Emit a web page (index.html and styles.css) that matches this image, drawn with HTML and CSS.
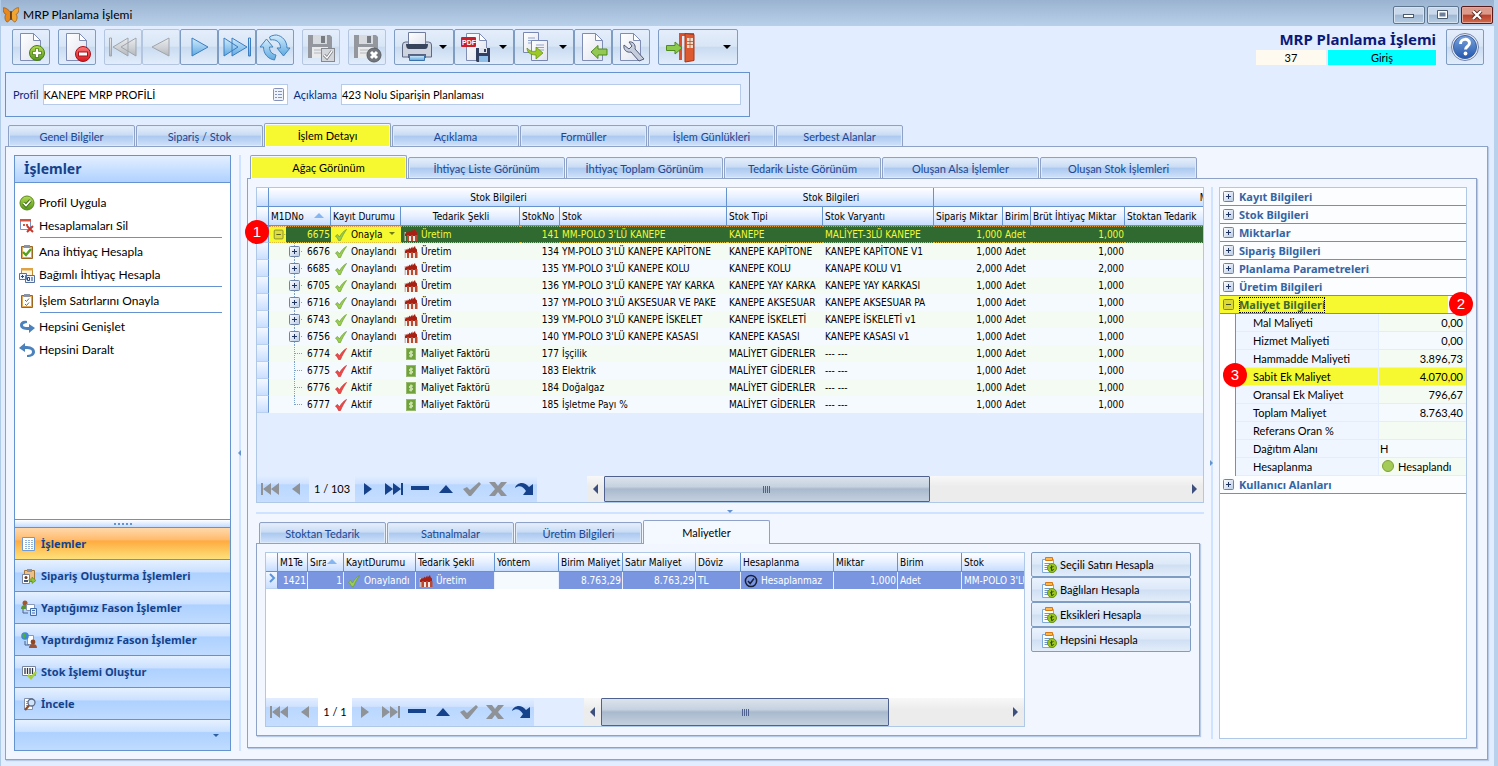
FILE: index.html
```html
<!DOCTYPE html>
<html lang="tr">
<head>
    <meta charset="UTF-8">
    <meta name="viewport" content="width=device-width, initial-scale=1.0">
    <title>MRP Planlama İşlemi</title>
    <link rel="stylesheet" href="styles.css">
</head>
<body>
    <!-- shared icons -->
    <svg class="sprite" width="0" height="0" aria-hidden="true">
        <defs>
            <linearGradient id="g-page" x1="0" y1="0" x2="1" y2="1"><stop offset="0" stop-color="#ffffff"/><stop offset="1" stop-color="#dfe3ee"/></linearGradient>
            <linearGradient id="g-green" x1="0" y1="0" x2="0" y2="1"><stop offset="0" stop-color="#b4dc52"/><stop offset="1" stop-color="#55961a"/></linearGradient>
            <linearGradient id="g-red" x1="0" y1="0" x2="0" y2="1"><stop offset="0" stop-color="#ff7a7a"/><stop offset="1" stop-color="#d8141c"/></linearGradient>
            <linearGradient id="g-blue" x1="0" y1="0" x2="0" y2="1"><stop offset="0" stop-color="#d3ecfb"/><stop offset="1" stop-color="#5ea9e2"/></linearGradient>
            <linearGradient id="g-gray" x1="0" y1="0" x2="0" y2="1"><stop offset="0" stop-color="#eceef0"/><stop offset="1" stop-color="#b4b8be"/></linearGradient>
            <linearGradient id="g-help" x1="0" y1="0" x2="0" y2="1"><stop offset="0" stop-color="#7ba4dc"/><stop offset="1" stop-color="#2458ae"/></linearGradient>
            <linearGradient id="g-box" x1="0" y1="0" x2="1" y2="1"><stop offset="0" stop-color="#ffffff"/><stop offset="1" stop-color="#b9cbe4"/></linearGradient>

            <symbol id="page" viewBox="0 0 32 32"><path d="M5.500 2.500h13l7 7v20h-20z" fill="url(#g-page)" stroke="#7f8db4"/><path d="M18.500 2.500v7h7z" fill="#fff" stroke="#7f8db4"/></symbol>
            <symbol id="floppy" viewBox="0 0 32 32"><path d="M3 4h22l2 2v21H3z" fill="#94989e"/><path d="M8 4h14v9H8z" fill="#d7dade"/><path d="M16 5h4v7h-4z" fill="#777b82"/><path d="M7 16h16v11H7z" fill="#e8eaec"/><path d="M9 19h12M9 22h12" stroke="#b6b9bd"/></symbol>
            <symbol id="t-open" viewBox="0 0 36 17"><rect x="3.500" y="3.500" width="10" height="10" rx="1" fill="#e0dc3a" stroke="#7f8b2c"/><path d="M6 8.500h5" stroke="#44501f"/><path d="M15 8.500h2" stroke="#8b8b2c" stroke-dasharray="1 1"/></symbol>
            <symbol id="t-plus" viewBox="0 0 36 17"><path d="M25.500 0v17M32 8.500h2" stroke="#7d9fc9" stroke-dasharray="1 1"/><rect x="20.500" y="3.500" width="10" height="10" rx="1" fill="url(#g-box)" stroke="#6d83a8"/><path d="M23 8.500h5M25.500 6v5" stroke="#1f3560"/></symbol>
            <symbol id="t-tee" viewBox="0 0 36 17"><path d="M25.500 0v17M26 8.500h8" stroke="#7d9fc9" stroke-dasharray="1 1"/></symbol>
            <symbol id="t-end" viewBox="0 0 36 17"><path d="M25.500 0v9M26 8.500h8" stroke="#7d9fc9" stroke-dasharray="1 1"/></symbol>
            <symbol id="box-plus" viewBox="0 0 11 11"><rect x=".5" y=".5" width="10" height="10" rx="1" fill="url(#g-box)" stroke="#6d83a8"/><path d="M3 5.500h5M5.500 3v5" stroke="#1f3560"/></symbol>
            <symbol id="box-minus" viewBox="0 0 11 11"><rect x=".5" y=".5" width="10" height="10" rx="1" fill="#dcd836" stroke="#7f8b2c"/><path d="M3 5.500h5" stroke="#44501f"/></symbol>
            <symbol id="tick-green" viewBox="0 0 14 14"><path d="M1.500 8l2-1.500 2 2.500C7 6 9.500 3 12.500 1.500 10.500 4.500 8 8.500 6.500 12.500h-2C4 11 3 9.500 1.500 8z" fill="#9bcf4e" stroke="#6c9c35" stroke-width=".7"/></symbol>
            <symbol id="tick-red" viewBox="0 0 14 14"><path d="M1.500 8l2-1.500 2 2.500C7 6 9.500 3 12.500 1.500 10.500 4.500 8 8.500 6.500 12.500h-2C4 11 3 9.500 1.500 8z" fill="#f04a4a" stroke="#c93030" stroke-width=".7"/></symbol>
            <symbol id="factory" viewBox="0 0 14 14"><path d="M.5 4H2v9H.5z" fill="#cdbcb8"/><path d="M1 6l2.500-2.500V5L6 2.500V4l2.500-2.500v2L11 1l.5 2L13 4.500V8H1z" fill="#a81f14"/><path d="M3 7h2v6H3zM7 7h2v6H7zM11 7h2.500v6H11z" fill="#b9492f"/><path d="M5 8h2v5H5zM9 8h2v5H9z" fill="#f2e9e6"/></symbol>
            <symbol id="money" viewBox="0 0 14 14"><rect x="2.500" y="1.500" width="9" height="11" fill="#6fa23a" stroke="#96b96d"/><path d="M9 5H6.500C5 5 5 7 6.500 7h1C9 7 9 9 7.500 9H5M7 3.500v7" fill="none" stroke="#e6f5cf"/></symbol>
            <symbol id="calc" viewBox="0 0 18 18"><path d="M2.500 3.500h11v13h-11z" fill="#fff" stroke="#7fa9d6"/><path d="M4.500 7.500h6M4.500 9.500h5M4.500 11.500h4M4.500 13.500h4" stroke="#6d97c8"/><path d="M5.500 1.500h7v3h-7z" fill="#ffb84d" stroke="#d9780f"/><circle cx="12" cy="12" r="4.500" fill="#9ac51e" stroke="#6b9410"/><path d="M11.500 9.500v5M10 12l3.500-1.500M11.500 14.500q2 0 2-1.500" fill="none" stroke="#2f4a05"/></symbol>

            <symbol id="n-first" viewBox="0 0 20 16"><path d="M1 2h2v12H1zM11 2v12L3 8zM19 2v12l-8-6z"/></symbol>
            <symbol id="n-prev" viewBox="0 0 20 16"><path d="M14 2v12L6 8z"/></symbol>
            <symbol id="n-next" viewBox="0 0 20 16"><path d="M6 2v12l8-6z"/></symbol>
            <symbol id="n-last" viewBox="0 0 20 16"><path d="M1 2v12l8-6zM9 2v12l8-6zM17 2h2v12h-2z"/></symbol>
            <symbol id="n-minus" viewBox="0 0 20 16"><path d="M1 5h18v4H1z"/></symbol>
            <symbol id="n-up" viewBox="0 0 20 16"><path d="M3 12h14l-7-8z"/></symbol>
            <symbol id="n-ok" viewBox="0 0 20 16"><path d="M1 8l4-2 3 3 9-8 2 2L9 15H7z"/></symbol>
            <symbol id="n-no" viewBox="0 0 20 16"><path d="M1 1h6l3 4 3-4h6l-6 7 6 7h-6l-3-4-3 4H1l6-7z"/></symbol>
            <symbol id="n-redo" viewBox="0 0 20 16"><path d="M1 7c1-5 9-8 14-1l4-3v11H9l3-4C9 5 5 4 1 7z"/></symbol>
        </defs>
    </svg>

    <header class="titlebar">
        <svg class="app-icon" viewBox="0 0 16 16"><path d="M8 6.500C6 2 1 0 0 1c0 3 1 6 3 6.500C1 9 2 14 4 15c2 0 4-4 4-6z" fill="#e8891d" stroke="#8a4408" stroke-width=".6"/><path d="M8 6.500c2-4.500 7-6.500 8-5.500 0 3-1 6-3 6.500 2 1.500 1 6.500-1 7.500-2 0-4-4-4-6z" fill="#f2a632" stroke="#8a4408" stroke-width=".6"/><path d="M8 4v9" stroke="#3c2208" stroke-width="1.200"/></svg>
        <span>MRP Planlama İşlemi</span>
        <div class="win-buttons">
            <button aria-label="Simge durumuna küçült"><svg viewBox="0 0 12 10"><rect x=".5" y="4.500" width="10" height="3" fill="#fff" stroke="#4c5a6e"/></svg></button>
            <button aria-label="Ekranı kapla"><svg viewBox="0 0 12 10"><rect x="1.500" y="1.500" width="8" height="6" fill="#6b7f99" stroke="#fff" stroke-width="2"/><path d="M.5.500h10v8H.5z" fill="none" stroke="#4c5a6e"/></svg></button>
            <button class="close" aria-label="Kapat"><svg viewBox="0 0 12 10"><path d="M2 1l8 8M10 1L2 9" stroke="#5c2a26" stroke-width="4"/><path d="M2 1l8 8M10 1L2 9" stroke="#fff" stroke-width="2.200"/></svg></button>
        </div>
    </header>

    <div class="toolbar">
        <button class="tool gap" aria-label="Yeni"><svg viewBox="0 0 32 32"><use href="#page"/><circle cx="22" cy="22" r="7.500" fill="url(#g-green)" stroke="#4b7d17"/><path d="M22 17.500v9M17.500 22h9" stroke="#3f7010" stroke-width="4"/><path d="M22 18v8M18 22h8" stroke="#fff" stroke-width="2.400"/></svg></button>
        <button class="tool gap" aria-label="Sil"><svg viewBox="0 0 32 32"><use href="#page"/><circle cx="22" cy="23" r="7.500" fill="url(#g-red)" stroke="#a51218"/><path d="M17 23h10" stroke="#a51218" stroke-width="5"/><path d="M18 23h8" stroke="#fff" stroke-width="3"/></svg></button>
        <button class="tool off" aria-label="İlk" disabled><svg viewBox="0 0 32 32"><path d="M2.500 7h2v18h-2zM29 7v18L14 16zM21 7v18L6 16z" fill="url(#g-gray)" stroke="#a0a5ac"/></svg></button>
        <button class="tool off" aria-label="Önceki" disabled><svg viewBox="0 0 32 32"><path d="M24 7v18L7 16z" fill="url(#g-gray)" stroke="#a0a5ac"/></svg></button>
        <button class="tool" aria-label="Sonraki"><svg viewBox="0 0 32 32"><path d="M9 7v18l16-9z" fill="url(#g-blue)" stroke="#3c7dc0"/></svg></button>
        <button class="tool" aria-label="Son"><svg viewBox="0 0 32 32"><path d="M27.500 7h2v18h-2zM3 7v18l14-9zM11 7v18l15-9z" fill="url(#g-blue)" stroke="#3c7dc0"/></svg></button>
        <button class="tool gap" aria-label="Yenile"><svg viewBox="0 0 32 32"><path d="M1 16l6.500-8 6.500 8h-3.500c0 4 2 7 6.500 8l-1.500 5C9 28 4.500 23 4.500 16z" fill="url(#g-blue)" stroke="#4583bd"/><path d="M31 17l-6.500 8-6.500-8h3.500c0-4-2-7-6-8-1-.3-3-.3-4 0l-1-3c2-1.500 5-2 7-2 6 1 10.500 6 10.500 13z" fill="url(#g-blue)" stroke="#4583bd"/></svg></button>
        <button class="tool off gap" aria-label="Kaydet" disabled><svg viewBox="0 0 32 32"><use href="#floppy"/><rect x="16.500" y="17.500" width="13" height="13" fill="#d3d6da" stroke="#85898f"/><path d="M19 24l3 3 5-7" fill="none" stroke="#777b81" stroke-width="3"/><path d="M19 24l3 3 5-7" fill="none" stroke="#fff" stroke-width="1.300"/></svg></button>
        <button class="tool off gap" aria-label="Vazgeç" disabled><svg viewBox="0 0 32 32"><use href="#floppy"/><circle cx="23" cy="24" r="7" fill="#73777d" stroke="#5c6066"/><path d="M20 21l6 6M26 21l-6 6" stroke="#fff" stroke-width="3"/></svg></button>
        <button class="tool drop" aria-label="Yazdır"><svg viewBox="0 0 32 32"><path d="M1.500 14q0-3 3-3h23q3 0 3 3v12h-29z" fill="#cdd3df" stroke="#5d6884"/><path d="M7.500 1.500h17v12h-17z" fill="url(#g-page)" stroke="#707c9d"/><path d="M5 13h22q0 5-3 5H8q-3 0-3-5z" fill="#38445c"/><path d="M7 23h18v4H7z" fill="#566482"/><path d="M8.500 24.500h15v5h-15z" fill="url(#g-blue)" stroke="#3c72ac"/></svg><i class="caret"></i></button>
        <button class="tool drop" aria-label="PDF kaydet"><svg viewBox="0 0 32 32"><use href="#page"/><rect x="0" y="6" width="15" height="10" rx="1" fill="#c91f2b"/><text x="1" y="13.500" class="pdf">PDF</text><path d="M15 17h14v14H16l-1-1z" fill="#323f5e"/><path d="M18 17h8v5h-8z" fill="#dfe4ee"/><path d="M23 18h2v3h-2z" fill="#323f5e"/><path d="M18 25h9v6h-9z" fill="#8fbfe9"/></svg><i class="caret"></i></button>
        <button class="tool drop" aria-label="Kopyala"><svg viewBox="0 0 32 32"><path d="M2.500 1.500h15v20h-15z" fill="url(#g-page)" stroke="#7987b4"/><path d="M7 7h7M7 9.500h7M7 12h5" stroke="#8fa3cf"/><path d="M10.500 9.500h16v20h-16z" fill="url(#g-page)" stroke="#7987b4"/><path d="M15 14h8M15 16.500h8M15 19h8" stroke="#8fa3cf"/><path d="M6 17c3 3 5 4 9 3v-4l7 6-7 6v-4c-6 0-9-3-9-7z" fill="#9cc926" stroke="#5d8a12" stroke-width=".7"/></svg><i class="caret"></i></button>
        <button class="tool" aria-label="İçe aktar"><svg viewBox="0 0 32 32"><use href="#page"/><path d="M14 21l7-6.500v3.500h9v6h-9v3.500z" fill="#93c853" stroke="#4e8a1c"/></svg></button>
        <button class="tool gap" aria-label="Ayarlar"><svg viewBox="0 0 32 32"><use href="#page"/><path d="M9 14c-1 5 3 8 7 7l8 9 5-2-9-10c1-4-2-8-6-7l3 4-3 3z" fill="#c6cedd" stroke="#4f5b77"/></svg></button>
        <button class="tool exit" aria-label="Çıkış"><svg viewBox="0 0 32 32"><path d="M14 2h15v3H17v24h-3z" fill="#d9512c"/><path d="M20 2.500l9 1v26l-9 1.500z" fill="#dd5a30" stroke="#a83516"/><path d="M22 7h6v10h-6z" fill="#f1dccb"/><path d="M25 7v10M22 10.500h6M22 13.500h6" stroke="#a8572e" stroke-width=".8"/><path d="M17 17l-7-6v3.500H1.500v5H10V23z" fill="#8cca4e" stroke="#4e8a1c"/></svg><i class="caret"></i></button>

        <div class="heading">
            <h1>MRP Planlama İşlemi</h1>
            <div class="heading-info"><span class="doc-no">37</span><span class="doc-state">Giriş</span></div>
        </div>
        <button class="tool help" aria-label="Yardım"><svg viewBox="0 0 32 32"><circle cx="16" cy="16" r="13.500" fill="#e6ecf6" stroke="#7383ab"/><circle cx="16" cy="16" r="11.500" fill="url(#g-help)" stroke="#3a5fa3"/><path d="M11.500 13c0-6 9-6 9-1 0 3.500-4 3.500-4 6.500" fill="none" stroke="#fff" stroke-width="3"/><circle cx="16.500" cy="22.500" r="1.900" fill="#fff"/></svg></button>
    </div>

    <form class="doc-form">
        <label for="profil">Profil</label>
        <div class="lookup">
            <input type="text" id="profil" value="KANEPE MRP PROFİLİ">
            <button type="button" aria-label="Profil seç"><svg viewBox="0 0 11 13"><rect x=".5" y=".5" width="10" height="12" rx="1" fill="#eef3fb" stroke="#8592bb"/><path d="M2 3.500h2M5 3.500h4M2 6.500h2M5 6.500h4M2 9.500h2M5 9.500h4" stroke="#8494bd"/></svg></button>
        </div>
        <label for="aciklama">Açıklama</label>
        <input type="text" id="aciklama" class="desc" value="423 Nolu Siparişin Planlaması">
    </form>

    <nav class="tabs">
        <button class="tab">Genel Bilgiler</button>
        <button class="tab">Sipariş / Stok</button>
        <button class="tab active marked">İşlem Detayı</button>
        <button class="tab">Açıklama</button>
        <button class="tab">Formüller</button>
        <button class="tab">İşlem Günlükleri</button>
        <button class="tab">Serbest Alanlar</button>
    </nav>

    <main class="page">
        <aside class="sidebar">
            <h2>İşlemler</h2>
            <div class="actions">
                <a href="#"><svg viewBox="0 0 16 16"><circle cx="8" cy="8" r="7" fill="url(#g-green)" stroke="#5b8a1d"/><path d="M4.500 8l2.500 2.500 4.500-5" fill="none" stroke="#3f6a10" stroke-width="3.400"/><path d="M4.500 8l2.500 2.500 4.500-5" fill="none" stroke="#fff" stroke-width="1.600"/></svg>Profil Uygula</a>
                <a href="#"><svg viewBox="0 0 16 16"><path d="M1.500 1.500h10v10h-10z" fill="#fff" stroke="#7d93c2"/><path d="M1 1h11v2.500H1z" fill="#d2553f"/><path d="M4 6h2v2H4zM7 6h2v2H7z" fill="#d2553f"/><path d="M8 8l6 6M14 8l-6 6" stroke="#c6382b" stroke-width="2"/></svg>Hesaplamaları Sil</a>
                <hr>
                <a href="#"><svg viewBox="0 0 16 16"><path d="M2.500 2.500h11v12h-11z" fill="#e6a755" stroke="#9d6620"/><path d="M4 4h8v9H4z" fill="#fff"/><path d="M5 1h6v3H5z" fill="#8a93a6"/><path d="M4 8l3 3 5-6" fill="none" stroke="#56a01c" stroke-width="2.400"/></svg>Ana İhtiyaç Hesapla</a>
                <a href="#"><svg viewBox="0 0 16 16"><path d="M2.500 1.500h11v8h-11z" fill="#fff4da" stroke="#c48a31"/><path d="M2 1h12v2.500H2z" fill="#dda344"/><path d="M.5 6.500h7v6h-7zM6.500 8.500h9v7h-9z" fill="#eef4fd" stroke="#54709f"/><path d="M2 9.500h3M3.500 8v3M8.500 10.500h2v3h-2zM13 10v4" fill="none" stroke="#27477f"/></svg>Bağımlı İhtiyaç Hesapla</a>
                <hr>
                <a href="#"><svg viewBox="0 0 16 16"><path d="M2.500 2.500h11v12h-11z" fill="#e6a755" stroke="#9d6620"/><path d="M4 4h8v9H4z" fill="#fff"/><path d="M5 1h6v3H5z" fill="#8a93a6"/><path d="M6 7l1.500 1.500L10 5.500M6 11l1.500 1.500L10 9.500" fill="none" stroke="#5c7a3c"/></svg>İşlem Satırlarını Onayla</a>
                <hr>
                <a href="#"><svg viewBox="0 0 16 16"><path d="M8 2C4 1 1 3 1 6c0 4 4 5 9 5v3l6-5-6-4v3C7 8 4 8 4 6c0-1 2-2 4-2z" fill="#4b82bd"/></svg>Hepsini Genişlet</a>
                <a href="#"><svg viewBox="0 0 16 16"><path d="M6 1L0 6l6 4V7c4 0 7 0 7 3 0 2-2 3-5 3v2c5 0 8-2 8-5 0-5-5-6-10-6z" fill="#4b82bd"/></svg>Hepsini Daralt</a>
            </div>
            <div class="nav-grip"><i></i><i></i><i></i><i></i><i></i></div>
            <button class="nav-item active"><svg viewBox="0 0 16 16"><path d="M1.500 1.500h12v13h-12z" fill="#fff" stroke="#6f9bd2"/><path d="M4 4.500h8M4 6.500h8M4 8.500h8M4 10.500h8M4 12.500h8" stroke="#8fb2dd" stroke-dasharray="2 1"/></svg>İşlemler</button>
            <button class="nav-item"><svg viewBox="0 0 16 16"><path d="M3.500 2.500h10v11h-10z" fill="#ecc189" stroke="#a5763a"/><path d="M6 1h5v3H6z" fill="#8a93a6"/><path d="M1.500 6.500h7v9h-7z" fill="#fff" stroke="#77819a"/><circle cx="5" cy="9.500" r="1.500" fill="#6b3c22"/><path d="M3 14v-2h4v2z" fill="#41587f"/><path d="M8 11h3V9l4 3.500-4 3V13H8z" fill="#8fc23f" stroke="#5d8a12" stroke-width=".6"/></svg>Sipariş Oluşturma İşlemleri</button>
            <button class="nav-item"><svg viewBox="0 0 16 16"><circle cx="4" cy="3" r="2.500" fill="#a3572d"/><path d="M0 9q0-4 4-4t4 4z" fill="#5a9434"/><path d="M5.500 4.500h8v6h-8z" fill="#fff" stroke="#8a98b8"/><path d="M2 9v4h5" fill="none" stroke="#4d6388"/><path d="M9.500 8.500h6v7h-6z" fill="#dceaff" stroke="#416fae"/><path d="M11 10.500h3M11 13h3" stroke="#416fae"/></svg>Yaptığımız Fason İşlemler</button>
            <button class="nav-item"><svg viewBox="0 0 16 16"><path d="M6.500 3.500h6v9h-6z" fill="#fff" stroke="#8a98b8"/><circle cx="4" cy="4" r="3.800" fill="#3f86d8"/><path d="M1 3l3-2 1 3-2 3z" fill="#49b03c"/><path d="M4 9v4h4" fill="none" stroke="#4d6388"/><circle cx="12" cy="10" r="2.400" fill="#8b4726"/><path d="M8 16q0-4 4-4t4 4z" fill="#9c5534"/></svg>Yaptırdığımız Fason İşlemler</button>
            <button class="nav-item"><svg viewBox="0 0 16 16"><path d="M1.500 2.500h13v9h-13z" fill="#fff" stroke="#76839e"/><path d="M4 4v6M6.500 4v6M9 4v6M11.500 4v6" stroke="#2c3448" stroke-width="1.300"/><path d="M7 11l3 3 5-6" fill="none" stroke="#a6cf3e" stroke-width="2.600"/></svg>Stok İşlemi Oluştur</button>
            <button class="nav-item"><svg viewBox="0 0 16 16"><path d="M3.500 2.500h8v11h-8z" fill="#fff" stroke="#8391ad"/><path d="M5 5.500h4M5 7.500h3M5 9.500h3" stroke="#8fa3cf"/><circle cx="10.500" cy="6.500" r="3.500" fill="#cfe4f9" stroke="#5c6b88" stroke-width="1.300"/><path d="M8 9.500L4 14" stroke="#8d4b24" stroke-width="2.200"/></svg>İncele</button>
            <div class="nav-more"><i class="caret"></i></div>
        </aside>

        <div class="splitter-v"><i></i></div>

        <section class="work">
            <nav class="tabs wide">
                <button class="tab active marked">Ağaç Görünüm</button>
                <button class="tab">İhtiyaç Liste Görünüm</button>
                <button class="tab">İhtiyaç Toplam Görünüm</button>
                <button class="tab">Tedarik Liste Görünüm</button>
                <button class="tab">Oluşan Alsa İşlemler</button>
                <button class="tab">Oluşan Stok İşlemleri</button>
            </nav>
            <div class="work-body">
                <div class="work-left">
                    <div class="tree-wrap">
                        <span class="badge badge-1">1</span>
                        <div class="grid tree">
                            <div class="grid-rows">
                                <table>
                                    <colgroup><col class="w12"><col class="w62"><col class="w70"><col class="w119"><col class="w40"><col class="w167"><col class="w96"><col class="w111"><col class="w69"><col class="w28"><col class="w94"><col class="w379"></colgroup>
                                    <thead>
                                        <tr class="bands"><th></th><th colspan="5">Stok Bilgileri</th><th colspan="2">Stok Bilgileri</th><th colspan="4">Miktarlar</th></tr>
                                        <tr><th></th><th>M1DNo<i class="sort"></i></th><th>Kayıt Durumu</th><th class="c">Tedarik Şekli</th><th>StokNo</th><th>Stok</th><th>Stok Tipi</th><th>Stok Varyantı</th><th>Sipariş Miktar</th><th>Birim</th><th>Brüt İhtiyaç Miktar</th><th>Stoktan Tedarik</th></tr>
                                    </thead>
                                    <tbody>
                                        <tr class="selected"><td></td><td class="no root"><svg><use href="#t-open"/></svg>6675</td><td class="st hot"><svg><use href="#tick-green"/></svg>Onayla<i class="caret"></i></td><td class="st"><svg><use href="#factory"/></svg>Üretim</td><td class="r">141</td><td>MM-POLO 3'LÜ KANEPE</td><td>KANEPE</td><td>MALİYET-3LÜ KANEPE</td><td class="r">1,000</td><td>Adet</td><td class="r">1,000</td><td></td></tr>
                                        <tr><td></td><td class="no"><svg><use href="#t-plus"/></svg>6676</td><td class="st"><svg><use href="#tick-green"/></svg>Onaylandı</td><td class="st"><svg><use href="#factory"/></svg>Üretim</td><td class="r">134</td><td>YM-POLO 3'LÜ KANEPE KAPİTONE</td><td>KANEPE KAPİTONE</td><td>KANEPE KAPİTONE V1</td><td class="r">1,000</td><td>Adet</td><td class="r">1,000</td><td></td></tr>
                                        <tr><td></td><td class="no"><svg><use href="#t-plus"/></svg>6685</td><td class="st"><svg><use href="#tick-green"/></svg>Onaylandı</td><td class="st"><svg><use href="#factory"/></svg>Üretim</td><td class="r">135</td><td>YM-POLO 3'LÜ KANEPE KOLU</td><td>KANEPE KOLU</td><td>KANAPE KOLU V1</td><td class="r">2,000</td><td>Adet</td><td class="r">2,000</td><td></td></tr>
                                        <tr><td></td><td class="no"><svg><use href="#t-plus"/></svg>6705</td><td class="st"><svg><use href="#tick-green"/></svg>Onaylandı</td><td class="st"><svg><use href="#factory"/></svg>Üretim</td><td class="r">136</td><td>YM-POLO 3'LÜ KANEPE YAY KARKA</td><td>KANEPE YAY KARKA</td><td>KANEPE YAY KARKASI</td><td class="r">1,000</td><td>Adet</td><td class="r">1,000</td><td></td></tr>
                                        <tr><td></td><td class="no"><svg><use href="#t-plus"/></svg>6716</td><td class="st"><svg><use href="#tick-green"/></svg>Onaylandı</td><td class="st"><svg><use href="#factory"/></svg>Üretim</td><td class="r">137</td><td>YM-POLO 3'LÜ AKSESUAR VE PAKE</td><td>KANEPE AKSESUAR</td><td>KANEPE AKSESUAR PA</td><td class="r">1,000</td><td>Adet</td><td class="r">1,000</td><td></td></tr>
                                        <tr><td></td><td class="no"><svg><use href="#t-plus"/></svg>6743</td><td class="st"><svg><use href="#tick-green"/></svg>Onaylandı</td><td class="st"><svg><use href="#factory"/></svg>Üretim</td><td class="r">139</td><td>YM-POLO 3'LÜ KANEPE İSKELET</td><td>KANEPE İSKELETİ</td><td>KANEPE İSKELETİ v1</td><td class="r">1,000</td><td>Adet</td><td class="r">1,000</td><td></td></tr>
                                        <tr><td></td><td class="no"><svg><use href="#t-plus"/></svg>6756</td><td class="st"><svg><use href="#tick-green"/></svg>Onaylandı</td><td class="st"><svg><use href="#factory"/></svg>Üretim</td><td class="r">140</td><td>YM-POLO 3'LÜ KANEPE KASASI</td><td>KANEPE KASASI</td><td>KANEPE KASASI v1</td><td class="r">1,000</td><td>Adet</td><td class="r">1,000</td><td></td></tr>
                                        <tr><td></td><td class="no"><svg><use href="#t-tee"/></svg>6774</td><td class="st"><svg><use href="#tick-red"/></svg>Aktif</td><td class="st"><svg><use href="#money"/></svg>Maliyet Faktörü</td><td class="r">177</td><td>İşçilik</td><td>MALİYET GİDERLER</td><td>--- ---</td><td class="r">1,000</td><td>Adet</td><td class="r">1,000</td><td></td></tr>
                                        <tr><td></td><td class="no"><svg><use href="#t-tee"/></svg>6775</td><td class="st"><svg><use href="#tick-red"/></svg>Aktif</td><td class="st"><svg><use href="#money"/></svg>Maliyet Faktörü</td><td class="r">183</td><td>Elektrik</td><td>MALİYET GİDERLER</td><td>--- ---</td><td class="r">1,000</td><td>Adet</td><td class="r">1,000</td><td></td></tr>
                                        <tr><td></td><td class="no"><svg><use href="#t-tee"/></svg>6776</td><td class="st"><svg><use href="#tick-red"/></svg>Aktif</td><td class="st"><svg><use href="#money"/></svg>Maliyet Faktörü</td><td class="r">184</td><td>Doğalgaz</td><td>MALİYET GİDERLER</td><td>--- ---</td><td class="r">1,000</td><td>Adet</td><td class="r">1,000</td><td></td></tr>
                                        <tr><td></td><td class="no"><svg><use href="#t-end"/></svg>6777</td><td class="st"><svg><use href="#tick-red"/></svg>Aktif</td><td class="st"><svg><use href="#money"/></svg>Maliyet Faktörü</td><td class="r">185</td><td>İşletme Payı %</td><td>MALİYET GİDERLER</td><td>--- ---</td><td class="r">1,000</td><td>Adet</td><td class="r">1,000</td><td></td></tr>
                                    </tbody>
                                </table>
                            </div>
                            <div class="grid-foot">
                                <div class="navigator">
                                    <button disabled aria-label="İlk kayıt"><svg><use href="#n-first"/></svg></button>
                                    <button disabled aria-label="Önceki kayıt"><svg><use href="#n-prev"/></svg></button>
                                    <span class="pos pos-wide">1 / 103</span>
                                    <button aria-label="Sonraki kayıt"><svg><use href="#n-next"/></svg></button>
                                    <button aria-label="Son kayıt"><svg><use href="#n-last"/></svg></button>
                                    <button aria-label="Kayıt sil"><svg><use href="#n-minus"/></svg></button>
                                    <button aria-label="Düzenle"><svg><use href="#n-up"/></svg></button>
                                    <button disabled aria-label="Onayla"><svg><use href="#n-ok"/></svg></button>
                                    <button disabled aria-label="İptal"><svg><use href="#n-no"/></svg></button>
                                    <button aria-label="Yenile"><svg><use href="#n-redo"/></svg></button>
                                </div>
                                <div class="scrollbar">
                                    <button class="arrow left" aria-label="Sola"></button>
                                    <div class="track"><div class="thumb thumb-tree"><i></i><i></i><i></i><i></i></div></div>
                                    <button class="arrow right" aria-label="Sağa"></button>
                                </div>
                            </div>
                        </div>
                    </div>

                    <div class="splitter-h"><i></i></div>

                    <nav class="tabs">
                        <button class="tab">Stoktan Tedarik</button>
                        <button class="tab">Satınalmalar</button>
                        <button class="tab">Üretim Bilgileri</button>
                        <button class="tab active">Maliyetler</button>
                    </nav>
                    <div class="detail">
                        <div class="grid costs">
                            <div class="grid-rows">
                                <table>
                                    <colgroup><col class="w12"><col class="w30"><col class="w36"><col class="w72"><col class="w79"><col class="w64"><col class="w64"><col class="w73"><col class="w45"><col class="w93"><col class="w64"><col class="w64"><col class="w167"></colgroup>
                                    <thead>
                                        <tr><th></th><th>M1Te</th><th><span class="cut">Sıra</span><i class="sort"></i></th><th>KayıtDurumu</th><th>Tedarik Şekli</th><th>Yöntem</th><th>Birim Maliyet</th><th>Satır Maliyet</th><th>Döviz</th><th>Hesaplanma</th><th>Miktar</th><th>Birim</th><th>Stok</th></tr>
                                    </thead>
                                    <tbody>
                                        <tr class="focus"><td><svg class="mark" viewBox="0 0 8 10"><path d="M2 1l4 4-4 4" fill="none" stroke="#5b96dd" stroke-width="2"/></svg></td><td class="r">1421</td><td class="r">1</td><td class="st"><svg><use href="#tick-green"/></svg>Onaylandı</td><td class="st"><svg><use href="#factory"/></svg>Üretim</td><td class="empty"></td><td class="r">8.763,29</td><td class="r">8.763,29</td><td>TL</td><td class="st"><svg viewBox="0 0 14 14"><circle cx="7" cy="7" r="5.600" fill="none" stroke="#17203a" stroke-width="1.500"/><path d="M4 7l2.200 2.500L10 4.500" fill="none" stroke="#17203a" stroke-width="1.500"/></svg>Hesaplanmaz</td><td class="r">1,000</td><td>Adet</td><td>MM-POLO 3'LÜ</td></tr>
                                    </tbody>
                                </table>
                            </div>
                            <div class="grid-foot">
                                <div class="navigator">
                                    <button disabled aria-label="İlk kayıt"><svg><use href="#n-first"/></svg></button>
                                    <button disabled aria-label="Önceki kayıt"><svg><use href="#n-prev"/></svg></button>
                                    <span class="pos">1 / 1</span>
                                    <button disabled aria-label="Sonraki kayıt"><svg><use href="#n-next"/></svg></button>
                                    <button disabled aria-label="Son kayıt"><svg><use href="#n-last"/></svg></button>
                                    <button aria-label="Kayıt sil"><svg><use href="#n-minus"/></svg></button>
                                    <button aria-label="Düzenle"><svg><use href="#n-up"/></svg></button>
                                    <button disabled aria-label="Onayla"><svg><use href="#n-ok"/></svg></button>
                                    <button disabled aria-label="İptal"><svg><use href="#n-no"/></svg></button>
                                    <button aria-label="Yenile"><svg><use href="#n-redo"/></svg></button>
                                </div>
                                <div class="scrollbar">
                                    <button class="arrow left" aria-label="Sola"></button>
                                    <div class="track"><div class="thumb thumb-costs"><i></i><i></i><i></i><i></i></div></div>
                                    <button class="arrow right" aria-label="Sağa"></button>
                                </div>
                            </div>
                        </div>
                        <div class="calc-buttons">
                            <button><svg><use href="#calc"/></svg>Seçili Satırı Hesapla</button>
                            <button><svg><use href="#calc"/></svg>Bağlıları Hesapla</button>
                            <button><svg><use href="#calc"/></svg>Eksikleri Hesapla</button>
                            <button><svg><use href="#calc"/></svg>Hepsini Hesapla</button>
                        </div>
                    </div>
                </div>

                <div class="splitter-v right"><i></i></div>

                <aside class="props">
                    <h3><svg><use href="#box-plus"/></svg>Kayıt Bilgileri</h3>
                    <h3><svg><use href="#box-plus"/></svg>Stok Bilgileri</h3>
                    <h3><svg><use href="#box-plus"/></svg>Miktarlar</h3>
                    <h3><svg><use href="#box-plus"/></svg>Sipariş Bilgileri</h3>
                    <h3><svg><use href="#box-plus"/></svg>Planlama Parametreleri</h3>
                    <h3><svg><use href="#box-plus"/></svg>Üretim Bilgileri</h3>
                    <h3 class="open"><svg><use href="#box-minus"/></svg><span>Maliyet Bilgileri</span><b class="badge badge-2">2</b></h3>
                    <div class="prop-body">
                        <span class="badge badge-3">3</span>
                        <table>
                            <tr><th>Mal Maliyeti</th><td>0,00</td></tr>
                            <tr><th>Hizmet Maliyeti</th><td>0,00</td></tr>
                            <tr><th>Hammadde Maliyeti</th><td>3.896,73</td></tr>
                            <tr class="hit"><th>Sabit Ek Maliyet</th><td>4.070,00</td></tr>
                            <tr><th>Oransal Ek Maliyet</th><td>796,67</td></tr>
                            <tr><th>Toplam Maliyet</th><td>8.763,40</td></tr>
                            <tr><th>Referans Oran %</th><td></td></tr>
                            <tr><th>Dağıtım Alanı</th><td class="l">H</td></tr>
                            <tr><th>Hesaplanma</th><td class="l"><i class="dot"></i>Hesaplandı</td></tr>
                        </table>
                    </div>
                    <h3><svg><use href="#box-plus"/></svg>Kullanıcı Alanları</h3>
                </aside>
            </div>
        </section>
    </main>
</body>
</html>
```

FILE: styles.css
```css
* {
    box-sizing: border-box;
}

body {
    margin: 0;
    min-height: 100vh;
    display: flex;
    flex-direction: column;
    font-family: Lato, 'Liberation Sans', sans-serif;
    font-size: 11px;
    line-height: 14px;
    color: #000;
    background: #e2edff;
    border-left: 1px solid #b0cbe8;
    border-right: 4px solid #b9d1ea;
    overflow-x: hidden;
}

button,
input {
    font: inherit;
    color: inherit;
    margin: 0;
    padding: 0;
}

i {
    display: block;
}

.sprite {
    position: absolute;
}

.caret {
    width: 0;
    height: 0;
    border: 4px solid transparent;
    border-top-color: #000;
    border-bottom: 0;
}

/* title bar */
.titlebar {
    display: flex;
    align-items: center;
    height: 26px;
    padding: 3px 0 0 2px;
    margin-right: -4px;
    gap: 4px;
    font-size: 12px;
    background: linear-gradient(#9ab3d0, #b9d0ea);
}

.app-icon {
    width: 16px;
    height: 16px;
}

.win-buttons {
    display: flex;
    gap: 2px;
    margin-left: auto;
    padding-right: 5px;
}

.win-buttons button {
    display: flex;
    align-items: center;
    justify-content: center;
    width: 32px;
    height: 18px;
    border: 1px solid #5f7691;
    border-radius: 2px;
    background: linear-gradient(#c9d9eb 45%, #9fb7d1 50%, #b5cce5);
    box-shadow: inset 0 0 0 1px #d6e3f1;
}

.win-buttons .close {
    border-color: #5b1a1a;
    background: linear-gradient(#dc9a8c 45%, #b8402e 50%, #cf6a4a);
    box-shadow: inset 0 0 0 1px #e3a79c;
}

.win-buttons svg {
    width: 12px;
    height: 10px;
}

/* toolbar */
.toolbar {
    display: flex;
    padding: 3px 10px 0 11px;
}

.tool {
    display: flex;
    align-items: center;
    justify-content: center;
    width: 38px;
    height: 36px;
    border: 1px solid #7f9cc3;
    border-radius: 2px;
    background: linear-gradient(#e4eefb, #d9e6f6 48%, #c9dbf1 50%, #e2edfb);
}

.tool.gap {
    margin-right: 8px;
}

.tool.off {
    border-color: #b4c6df;
}

.tool svg {
    width: 32px;
    height: 32px;
}

.tool.drop {
    width: 60px;
    gap: 6px;
}

.tool.exit {
    width: 80px;
    justify-content: space-between;
    padding: 0 6px;
}

.pdf {
    font: bold 7px 'Liberation Sans', sans-serif;
    fill: #fff;
}

.heading {
    margin-left: auto;
    margin-right: 10px;
    text-align: right;
}

.heading h1 {
    margin: 0;
    font-family: 'Noto Sans', sans-serif;
    font-size: 15px;
    line-height: 21px;
    color: #0b1a78;
}

.heading-info {
    display: flex;
    justify-content: flex-end;
    gap: 2px;
    text-align: center;
}

.doc-no {
    width: 70px;
    background: #fffaf0;
}

.doc-state {
    width: 108px;
    background: #00ffff;
}

.doc-no,
.doc-state {
    line-height: 15px;
}

/* profile form */
.doc-form {
    display: flex;
    align-items: center;
    align-self: flex-start;
    height: 45px;
    margin: 7px 0 0 4px;
    padding: 0 8px 0 7px;
    border: 1px solid #6593cf;
    color: #0b2a7a;
}

.doc-form label {
    margin-right: 4px;
}

.lookup {
    display: flex;
    align-items: center;
    width: 245px;
    margin-right: 6px;
    background: #fff;
    border: 1px solid #b5cbe9;
}

.lookup input {
    flex: 1;
    min-width: 0;
    border: 0;
}

.lookup button {
    display: flex;
    padding-right: 3px;
    border: 0;
    background: none;
}

.lookup svg {
    width: 11px;
    height: 13px;
}

.doc-form input {
    height: 19px;
    color: #000;
    outline: none;
}

.doc-form .desc {
    width: 400px;
    height: 21px;
    border: 1px solid #b5cbe9;
}

/* tabs */
.tabs {
    display: flex;
    align-items: flex-end;
    gap: 1px;
    height: 24px;
    margin-left: 3px;
    margin-bottom: -1px;
    position: relative;
}

body > .tabs {
    margin: 6px 0 -1px 7px;
}

.tab {
    width: 127px;
    height: 22px;
    padding-top: 1px;
    border: 1px solid #8ea2c8;
    border-radius: 2px 2px 0 0;
    background: linear-gradient(#e6effb, #c8dbf4 46%, #abc8ef 50%, #d0e2fa);
    box-shadow: inset 0 0 0 1px #dfeaf9;
    color: #1b4793;
}

.wide .tab {
    width: 157px;
}

.tab.active {
    height: 24px;
    border-bottom: 0;
    background: #f4f8ff;
    box-shadow: none;
    color: #000;
}

.tab.marked {
    background: #f6f930;
    box-shadow: inset 0 0 0 1px #f4f8ff;
}

/* main page */
.page {
    flex: 1;
    display: flex;
    margin: 0 6px 6px 4px;
    padding: 8px 10px 8px 8px;
    border: 1px solid #8ea2c8;
    background: #f2f7ff;
    box-shadow: 1px 1px 1px #b8cae6;
}

/* left menu */
.sidebar {
    display: flex;
    flex-direction: column;
    width: 217px;
    border: 1px solid #6593cf;
    background: #fff;
}

.sidebar h2 {
    margin: 0;
    padding-left: 9px;
    font-family: 'Noto Sans', sans-serif;
    font-size: 14px;
    line-height: 26px;
    color: #15428b;
    background: linear-gradient(#e3efff, #afd2ff);
    border-bottom: 1px solid #6593cf;
}

.actions {
    flex: 1;
    padding: 8px 8px 0 4px;
    font-size: 12px;
}

.actions a {
    display: flex;
    align-items: center;
    gap: 4px;
    height: 23px;
    color: #000;
    text-decoration: none;
}

.actions hr {
    margin: 0 0 2px 21px;
    border: 0;
    border-top: 1px solid #6593cf;
}

.sidebar svg {
    width: 16px;
    height: 16px;
}

.nav-grip {
    display: flex;
    align-items: center;
    justify-content: center;
    gap: 2px;
    height: 8px;
    border-top: 1px solid #6593cf;
    background: linear-gradient(#fff, #c4dcff);
}

.nav-grip i {
    width: 2px;
    height: 2px;
    background: #6593cf;
}

.nav-item,
.nav-more {
    display: flex;
    align-items: center;
    height: 32px;
    border: 0;
    border-top: 1px solid #6593cf;
    background: linear-gradient(#e6f1ff, #cbe1ff 38%, #add1ff 42%, #c0dbff);
}

.nav-item {
    gap: 4px;
    padding-left: 6px;
    font-family: 'Noto Sans', sans-serif;
    font-size: 11px;
    font-weight: bold;
    color: #15428b;
}

.nav-item.active {
    background: linear-gradient(#ffd9aa, #ffbb6e 38%, #ffab3f 42%, #fee17a);
}

.nav-more {
    justify-content: flex-end;
    height: 31px;
    padding-right: 11px;
}

.nav-more .caret {
    border-width: 3px 3px 0;
    border-top-color: #2f5f9f;
}

/* splitters */
.splitter-v {
    display: flex;
    align-items: center;
    justify-content: center;
    width: 16px;
    background: linear-gradient(#cfe2ff, #cfe2ff) 8px 0 / 2px 100% no-repeat;
}

.splitter-v i {
    border: 3px solid transparent;
    border-right-color: #6593cf;
    border-left: 0;
}

.splitter-v.right {
    width: 15px;
    background-position: 7px 0;
}

.splitter-v.right i {
    border-left: 3px solid #6593cf;
    border-right: 0;
}

.splitter-h {
    display: flex;
    align-items: center;
    justify-content: center;
    height: 17px;
    background: linear-gradient(#cfe2ff, #cfe2ff) 0 9px / 100% 2px no-repeat;
}

.splitter-h i {
    border: 3px solid transparent;
    border-top-color: #6593cf;
    border-bottom: 0;
}

/* work area */
.work {
    flex: 1;
    min-width: 0;
    display: flex;
    flex-direction: column;
    padding-bottom: 3px;
}

.work-body {
    flex: 1;
    display: flex;
    padding: 8px 9px 8px 8px;
    border: 1px solid #8ea2c8;
    box-shadow: 1px 1px 1px #b8cae6;
}

.work-left {
    flex: 1;
    min-width: 0;
    display: flex;
    flex-direction: column;
    padding-bottom: 3px;
}

.tree-wrap {
    flex: 1;
    display: flex;
    position: relative;
}

/* grids */
.grid {
    flex: 1;
    min-width: 0;
    display: flex;
    flex-direction: column;
    border: 1px solid #b0c8e8;
}

.tree {
    background: #e2edff;
}

.costs {
    height: 175px;
    background: #fff;
}

.grid-rows {
    flex: 1;
    overflow: hidden;
}

table {
    border-collapse: separate;
    border-spacing: 0;
    table-layout: fixed;
}

.grid table {
    width: 0;
    font-family: 'DejaVu Sans Condensed', Lato, sans-serif;
    font-size: 10px;
}

.w12 { width: 12px; }
.w28 { width: 28px; }
.w30 { width: 30px; }
.w36 { width: 36px; }
.w40 { width: 40px; }
.w45 { width: 45px; }
.w62 { width: 62px; }
.w64 { width: 64px; }
.w69 { width: 69px; }
.w70 { width: 70px; }
.w72 { width: 72px; }
.w73 { width: 73px; }
.w79 { width: 79px; }
.w93 { width: 93px; }
.w94 { width: 94px; }
.w96 { width: 96px; }
.w111 { width: 111px; }
.w119 { width: 119px; }
.w167 { width: 167px; }
.w379 { width: 379px; }

.grid th,
.grid td {
    padding: 0 0 0 2px;
    white-space: nowrap;
    overflow: hidden;
}

.grid th {
    position: relative;
    height: 19px;
    padding: 1px 0 0 2px;
    font-weight: normal;
    text-align: left;
    background: linear-gradient(#fff, #e6f0ff 50%, #c6ddff);
    border-right: 1px solid #6593cf;
    border-bottom: 1px solid #6593cf;
}

.grid .bands th,
.grid th.c {
    text-align: center;
}

.sort {
    position: absolute;
    right: 6px;
    top: 6px;
    border: 5px solid transparent;
    border-bottom-color: #86b6f0;
    border-top: 0;
}

.cut {
    display: inline-block;
    width: 16px;
    overflow: hidden;
    vertical-align: top;
}

.grid td {
    height: 17px;
    line-height: 17px;
    vertical-align: top;
}

.grid td:first-child {
    background: linear-gradient(#f4f8ff, #c9dfff);
    border-right: 1px solid #6593cf;
    border-bottom: 1px solid #b9d0ee;
    line-height: 16px;
}

.tree tbody tr {
    background: #f5faff;
}

.tree tbody tr:nth-child(even) {
    background: #f4fbf2;
}

.grid .r {
    padding-right: 1px;
    text-align: right;
}

.grid .no {
    padding-right: 1px;
    text-align: right;
}

.no svg {
    float: left;
    width: 36px;
    height: 17px;
    margin: 0 -4px 0 -2px;
}

.grid .st {
    padding-left: 3px;
}

.st svg {
    width: 14px;
    height: 14px;
    margin-top: 2px;
    margin-right: 3px;
    vertical-align: top;
}

.tree .selected td {
    background: #316a31;
    color: #f6f930;
    line-height: 15px;
    border-top: 1px dotted #e09a3c;
    border-bottom: 1px dotted #e0c03c;
}

.tree .selected td:first-child {
    background: linear-gradient(#f4f8ff, #c9dfff);
    border-top: 0;
    border-bottom: 1px solid #b9d0ee;
}

.tree .selected .root {
    background: linear-gradient(90deg, #f6f930 17px, #316a31 17px);
}

.selected .root svg {
    height: 15px;
}

.selected .st svg {
    margin-top: 1px;
}

.tree .selected .hot {
    position: relative;
    background: #f6f930;
    color: #000;
}

.hot .caret {
    position: absolute;
    right: 6px;
    top: 5px;
    border-width: 3px 3px 0;
    border-top-color: #6f7a14;
}

.focus td {
    background: #7b96e0;
    color: #fff;
    border-right: 1px solid #e6eeff;
}

.focus .empty {
    background: #f5faff;
}

.mark {
    width: 8px;
    height: 10px;
}

/* navigator and scrollbar under a grid */
.grid-foot {
    display: flex;
    justify-content: space-between;
    height: 26px;
    background: #e2edff;
}

.costs .grid-foot {
    height: 28px;
}

.navigator {
    display: flex;
    align-items: stretch;
}

.navigator button {
    display: flex;
    align-items: center;
    justify-content: center;
    width: 26px;
    border: 0;
    background: linear-gradient(#e2edff, #cfe2ff 30%, #b9d7ff 34%, #c6deff);
    fill: #15428b;
}

.navigator button:disabled {
    fill: #8f9296;
}

.navigator svg {
    width: 20px;
    height: 16px;
}

.pos {
    display: flex;
    align-items: center;
    justify-content: center;
    width: 34px;
    background: #fff;
}

.pos-wide {
    width: 46px;
    background: #e2edff;
}

.scrollbar {
    display: flex;
    width: 616px;
    background: linear-gradient(#f8f8f8, #ececec 40%);
}

.costs .scrollbar {
    width: 440px;
}

.arrow {
    width: 17px;
    border: 0;
    background: none;
}

.arrow::before {
    content: "";
    display: block;
    width: 0;
    margin: auto;
    border: 5px solid transparent;
}

.arrow.left::before {
    border-right-color: #3d4f7d;
    border-left: 0;
}

.arrow.right::before {
    border-left-color: #3d4f7d;
    border-right: 0;
}

.track {
    flex: 1;
    display: flex;
}

.thumb {
    display: flex;
    align-items: center;
    justify-content: center;
    gap: 1px;
    border: 1px solid #4e618f;
    border-radius: 1px;
    background: linear-gradient(#dbe3ec, #c6d2e0 40%, #a9b9cd 50%, #c3d0df);
}

.thumb i {
    width: 1px;
    height: 7px;
    background: #4e618f;
}

.thumb-tree {
    width: 56%;
}

.thumb-costs {
    width: 71%;
}

/* detail pane */
.detail {
    display: flex;
    gap: 6px;
    margin-right: 4px;
    padding: 8px;
    border: 1px solid #8ea2c8;
    box-shadow: 1px 1px 1px #b8cae6;
}

.calc-buttons {
    width: 160px;
}

.calc-buttons button {
    display: flex;
    align-items: center;
    gap: 2px;
    width: 100%;
    height: 25px;
    padding-left: 8px;
    border: 1px solid #7f9cc3;
    border-radius: 2px;
    background: linear-gradient(#eaf2fd, #dde9f8 48%, #cfdff3 52%, #e3edfa);
}

.calc-buttons svg {
    width: 18px;
    height: 18px;
}

/* property list */
.props {
    width: 248px;
    border: 1px solid #b0c8e8;
    background: #fff;
}

.props h3 {
    position: relative;
    display: flex;
    align-items: center;
    gap: 5px;
    height: 18px;
    margin: 0;
    padding-left: 3px;
    font-family: 'Noto Sans', sans-serif;
    font-size: 11px;
    line-height: 16px;
    color: #3465a4;
    background: #fbfdff;
    border-bottom: 1px solid #6593cf;
}

.props h3 svg {
    width: 11px;
    height: 11px;
}

.props .open {
    color: #3c6a2c;
    background: linear-gradient(90deg, #f6f930 228px, #fbfdff 228px);
}

.open span {
    outline: 1px dotted #000;
    outline-offset: -1px;
}

.prop-body {
    position: relative;
    padding-left: 15px;
    border-bottom: 1px solid #6593cf;
    margin-bottom: -1px;
}

.prop-body table {
    width: 100%;
    border-left: 1px solid #6593cf;
}

.prop-body th,
.prop-body td {
    height: 18px;
    padding: 0 3px 0 1px;
    border-bottom: 1px solid #e2edff;
    font-weight: normal;
}

.prop-body th {
    width: 143px;
    padding-left: 17px;
    text-align: left;
    background: #f0f6ff;
    border-right: 1px solid #e2edff;
}

.prop-body td {
    text-align: right;
    background: #f5faff;
}

.prop-body tr:nth-child(odd) td {
    background: #f4fbf2;
}

.prop-body .l {
    text-align: left;
}

.prop-body .hit th,
.prop-body .hit td {
    background: #f6f930;
}

.dot {
    display: inline-block;
    width: 12px;
    height: 12px;
    margin: 0 4px 0 2px;
    vertical-align: top;
    border: 1px solid #7ea03a;
    border-radius: 50%;
    background: #a3cb55;
}

/* numbered callouts */
.badge {
    position: absolute;
    z-index: 2;
    width: 24px;
    height: 24px;
    border-radius: 50%;
    background: #f00;
    color: #fff;
    font-family: 'Liberation Sans', sans-serif;
    font-size: 15px;
    font-weight: normal;
    line-height: 24px;
    text-align: center;
}

.badge-1 {
    left: -11px;
    top: 33px;
}

.badge-2 {
    right: -7px;
    top: -4px;
}

.badge-3 {
    left: 3px;
    top: 49px;
}
```
